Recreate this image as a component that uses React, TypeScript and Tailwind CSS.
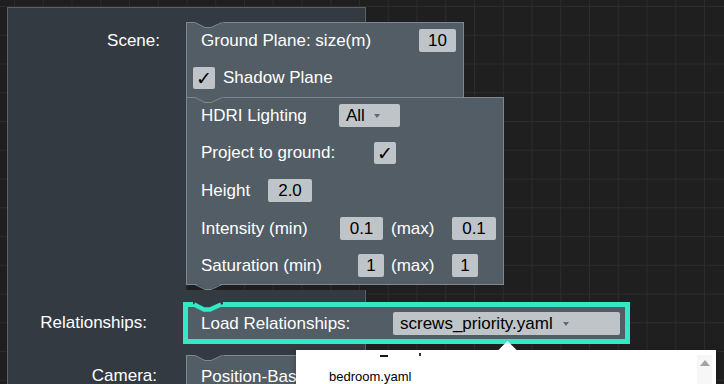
import React from 'react';

// top notch of a block: V cut-in, filled with whatever sits behind it
function Notch({ fill, stroke, sw = 1, className = '' }: { fill: string; stroke: string; sw?: number; className?: string }) {
  return (
    <svg className={`absolute overflow-visible ${className}`} width="40" height="8" viewBox="0 0 40 8">
      <polygon points="8,-3 38,-3 38,0 25,5.5 19,5.5 8,0" fill={fill} />
      <polyline points="9,0.5 19,5.5 25,5.5 36,0.5" fill="none" stroke={stroke} strokeWidth={sw} strokeLinejoin="round" />
    </svg>
  );
}

function Field({ value, className = '' }: { value: string; className?: string }) {
  return (
    <div className={`h-[23px] shrink-0 rounded-[2px] bg-[#bfc4c8] text-black flex items-center justify-center ${className}`}>
      {value}
    </div>
  );
}

function Check() {
  return (
    <div className="w-[22px] h-[22px] shrink-0 rounded-[2px] bg-[#bfc4c8] text-black flex items-center justify-center font-['DejaVu_Sans',sans-serif] text-[19px] leading-[22px]">
      ✓
    </div>
  );
}

function Caret() {
  return <span className="w-0 h-0 border-x-[3px] border-x-transparent border-t-[4px] border-t-[#5f6a73]" />;
}

export default function App() {
  return (
    <div className="relative w-[724px] h-[384px] overflow-hidden bg-[#1f1f1f] bg-[linear-gradient(to_right,#2c2c2c_1px,transparent_1px),linear-gradient(to_bottom,#2c2c2c_1px,transparent_1px)] bg-size-[28.75px_28.75px] bg-position-[14px_6px] pt-[7px] pl-[7px] font-['Liberation_Sans',Arial,sans-serif] text-[17px] leading-[20px] text-white">
      {/* outer block */}
      <div className="w-[359px] flex flex-col">
        <div className="h-[15px] bg-[#333a42] border-t border-x border-[#5c6168]" />

        {/* Scene */}
        <div className="flex">
          <div className="w-[179px] shrink-0 bg-[#333a42] border-l border-[#5c6168] pt-[9px] pr-[26px] text-right">Scene:</div>
          <div className="w-[180px] flex flex-col">
            <div className="relative w-[278px] h-[75px] shrink-0 bg-[#525d66] border border-b-0 border-[#7e8890] flex flex-col">
              <Notch fill="#333a42" stroke="#7e8890" className="-top-px -left-px" />
              <div className="mt-[6px] h-[23px] flex items-center justify-between pl-[14px] pr-[7px]">
                <span>Ground Plane: size(m)</span>
                <Field value="10" className="w-[37px]" />
              </div>
              <div className="mt-[15px] h-[22px] flex items-center gap-[8px] pl-[6px]">
                <Check />
                <span>Shadow Plane</span>
              </div>
            </div>

            <div className="relative w-[318px] h-[188px] shrink-0 bg-[#525d66] border border-[#7e8890] flex flex-col pl-[14px]">
              <Notch fill="#525d66" stroke="#7e8890" className="-top-px -left-px" />
              <div className="mt-[6px] h-[23px] flex items-center">
                <span className="w-[138px] shrink-0">HDRI Lighting</span>
                <div className="w-[61px] h-[23px] rounded-[2px] bg-[#bfc4c8] text-black flex items-center pl-[7px] gap-[9px]">
                  <span>All</span>
                  <Caret />
                </div>
              </div>
              <div className="mt-[15px] h-[22px] flex items-center">
                <span className="w-[173px] shrink-0">Project to ground:</span>
                <Check />
              </div>
              <div className="mt-[15px] h-[23px] flex items-center">
                <span className="w-[67px] shrink-0">Height</span>
                <Field value="2.0" className="w-[44px]" />
              </div>
              <div className="mt-[15px] h-[23px] flex items-center">
                <span className="w-[139px] shrink-0">Intensity (min)</span>
                <Field value="0.1" className="w-[43px]" />
                <span className="w-[69px] shrink-0 pl-[8px]">(max)</span>
                <Field value="0.1" className="w-[44px]" />
              </div>
              <div className="mt-[14px] h-[23px] flex items-center">
                <span className="w-[157px] shrink-0">Saturation (min)</span>
                <Field value="1" className="w-[26px]" />
                <span className="w-[68px] shrink-0 pl-[7px]">(max)</span>
                <Field value="1" className="w-[26px]" />
              </div>
              <svg className="absolute top-[186px] -left-px overflow-visible" width="40" height="6" viewBox="0 0 40 6">
                <polygon points="10,0 19,5 25,5 35,0" fill="#525d66" />
                <polyline points="9,0.5 19,5.5 25,5.5 36,0.5" fill="none" stroke="#7e8890" strokeWidth="1" />
              </svg>
            </div>
            <div className="h-[5px]" />
          </div>
        </div>

        <div className="h-[12px] bg-[#333a42] border-x border-[#5c6168]" />

        {/* Relationships */}
        <div className="flex">
          <div className="w-[179px] shrink-0 bg-[#333a42] border-l border-[#5c6168] pt-[11px] pr-[39px] text-right">Relationships:</div>
          <div className="w-[180px] py-[2px]">
            <div className="relative -ml-px w-[443px] h-[38px] bg-[#525d66] border-[3px] border-[#33e8c4] shadow-[0_0_0_2px_#33e8c4] pl-[13px] pt-[5px]">
              <Notch fill="#333a42" stroke="#33e8c4" sw={4.5} className="-top-[3px] -left-[3px]" />
              <div className="h-[23px] flex items-center">
                <span className="w-[192px] shrink-0">Load Relationships:</span>
                <div className="w-[227px] h-[23px] rounded-[2px] bg-[#bfc4c8] text-black flex items-center pl-[7px] gap-[10px]">
                  <span>screws_priority.yaml</span>
                  <Caret />
                </div>
              </div>
            </div>
          </div>
        </div>

        <div className="h-[11px] bg-[#333a42] border-x border-[#5c6168]" />

        {/* Camera */}
        <div className="flex">
          <div className="w-[179px] shrink-0 bg-[#333a42] border-l border-[#5c6168] pt-[11px] pr-[29px] text-right">Camera:</div>
          <div className="w-[180px]">
            <div className="relative w-[111px] h-[80px] bg-[#525d66] border border-r-0 border-[#7e8890] pl-[14px] pt-[9px]">
              <Notch fill="#333a42" stroke="#7e8890" className="-top-px -left-px" />
              <div className="h-[23px] flex items-center whitespace-nowrap overflow-hidden">Position-Based Camera</div>
            </div>
          </div>
        </div>
      </div>

      {/* dropdown menu */}
      <div className="absolute left-[296px] top-[350px] w-[420px] h-[40px] bg-white flex shadow-[0_2px_6px_rgba(0,0,0,0.3)]">
        <div className="absolute left-[204px] -top-[6px] w-[15px] h-[15px] bg-white rotate-45" />
        <div className="relative flex-1 pt-[3px]">
          <div className="flex items-start h-[4px]">
            <span className="ml-[84px] mt-[2px] w-[8px] h-[2px] bg-[#1a1a1a]" />
            <span className="ml-[31px] w-[2px] h-[3px] bg-[#30306a]" />
          </div>
          <div className="mt-[12px] pl-[33px] text-[13px] leading-[16px] text-black">bedroom.yaml</div>
        </div>
        <div className="mt-[5px] mr-[4px] w-[15px] bg-[#f7f7f7] flex justify-center pt-[5px]">
          <span className="w-0 h-0 border-x-[5px] border-x-transparent border-b-[6px] border-b-[#a3a3a3]" />
        </div>
      </div>
    </div>
  );
}
